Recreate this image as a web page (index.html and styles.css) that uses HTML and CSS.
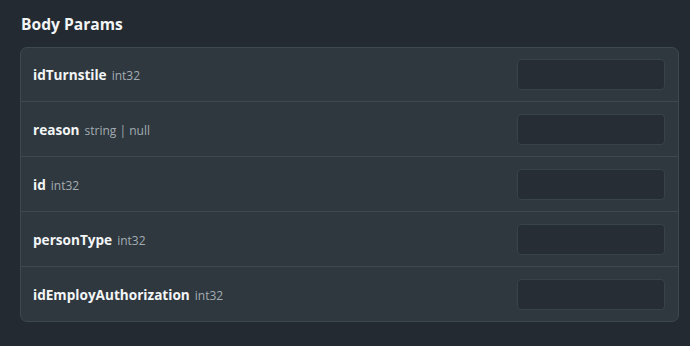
FILE: index.html
```html
<!DOCTYPE html>
<html>
<head>
<meta charset="utf-8">
<link rel="stylesheet" href="styles.css">
</head>
<body>
<div class="wrap">
  <h2 class="title">Body Params</h2>
  <div class="card">
    <div class="row">
      <div class="label"><span class="name">idTurnstile</span><span class="type">int32</span></div>
      <input class="field" type="text">
    </div>
    <div class="row">
      <div class="label"><span class="name">reason</span><span class="type">string | null</span></div>
      <input class="field" type="text">
    </div>
    <div class="row">
      <div class="label"><span class="name">id</span><span class="type">int32</span></div>
      <input class="field" type="text">
    </div>
    <div class="row">
      <div class="label"><span class="name">personType</span><span class="type">int32</span></div>
      <input class="field" type="text">
    </div>
    <div class="row">
      <div class="label"><span class="name">idEmployAuthorization</span><span class="type">int32</span></div>
      <input class="field" type="text">
    </div>
  </div>
</div>
</body>
</html>
```
FILE: styles.css
```css
html, body {
  margin: 0;
  padding: 0;
  background: #242a31;
  font-family: "Open Sans", "Noto Sans", sans-serif;
  color: #ffffff;
}
.wrap {
  padding: 12px 11px 0 20px;
}
.title {
  margin: 0 0 11px 1px;
  font-size: 15.6px;
  font-weight: 700;
  line-height: 24px;
  color: #f2f4f5;
}
.card {
  background: #2f383f;
  border: 1px solid #3e484f;
  border-radius: 7px;
}
.row {
  display: flex;
  align-items: center;
  justify-content: space-between;
  height: 54px;
  padding: 0 13px 0 12px;
  border-top: 1px solid #3e484f;
}
.row:first-child {
  border-top: none;
  height: 53px;
}
.label {
  display: flex;
  align-items: baseline;
  gap: 5px;
}
.name {
  font-size: 13.6px;
  font-weight: 700;
  color: #f3f5f6;
}
.type {
  font-size: 12px;
  color: #a3acb2;
}
.field {
  width: 148px;
  height: 31px;
  box-sizing: border-box;
  background: #262d34;
  border: 1px solid #38424a;
  border-radius: 4px;
  margin: 0;
  padding: 0;
  flex: none;
}
```
